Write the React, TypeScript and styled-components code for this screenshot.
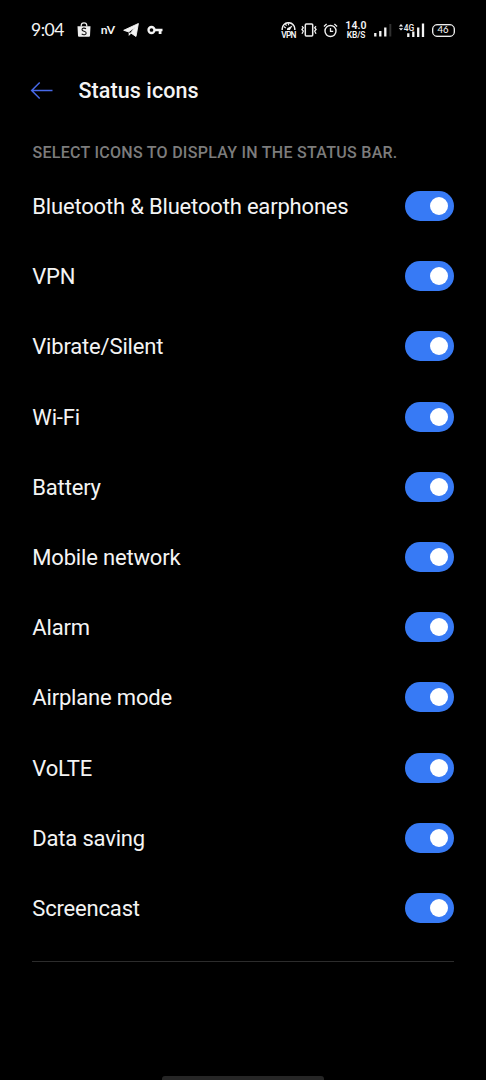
import React, { useState } from 'react';
import styled, { createGlobalStyle } from 'styled-components';

const GlobalStyle = createGlobalStyle`
  * { box-sizing: border-box; }
  body { margin: 0; background: #000; }
`;

const Screen = styled.div`
  display: flex;
  flex-direction: column;
  width: 486px;
  height: 1080px;
  overflow: hidden;
  background: #000;
  color: #f4f4f4;
  font-family: Roboto, sans-serif;
`;

const StatusBar = styled.header`
  display: flex;
  justify-content: space-between;
  align-items: center;
  height: 60px;
  padding: 0 32px 0 31px;
`;

const StatusGroup = styled.div`
  display: flex;
  align-items: center;
  height: 24px;
`;

const Slot = styled.div<{ $width: number; $gap?: number }>`
  display: flex;
  flex-direction: column;
  align-items: center;
  justify-content: center;
  flex: none;
  width: ${(p) => p.$width}px;
  height: 24px;
  margin-left: ${(p) => p.$gap ?? 0}px;
  white-space: nowrap;

  svg { display: block; flex: none; }
`;

const Clock = styled.span`
  font: 400 17.5px/24px Lato, sans-serif;
  letter-spacing: -0.5px;
`;

const Carrier = styled.span`
  font: 700 12px/24px Lato, sans-serif;
`;

const VpnLabel = styled.span`
  padding-top: 1px;
  font: 600 8.4px/8px Roboto, sans-serif;
  letter-spacing: -0.8px;
`;

const SpeedValue = styled.span`
  font: 600 10.5px/10px Roboto, sans-serif;
  letter-spacing: 0.1px;
`;

const SpeedUnit = styled.span`
  font: 600 8.4px/8px Roboto, sans-serif;
  letter-spacing: -0.1px;
`;

const BatteryPill = styled.div`
  display: flex;
  align-items: center;
  justify-content: center;
  width: 23px;
  height: 13px;
  border: 1px solid #eee;
  border-radius: 5px;
  box-shadow: inset 0 0 0 0.5px #aaa;
  font: 500 9.5px/10px Lato, sans-serif;
`;

const TitleBar = styled.div`
  display: flex;
  align-items: center;
  height: 60px;
  padding-left: 30px;
`;

const BackButton = styled.button`
  display: flex;
  width: 24px;
  height: 24px;
  margin: 0 24.5px 0 0;
  padding: 0;
  border: 0;
  background: none;
`;

const Title = styled.h1`
  margin: 0;
  padding-top: 1px;
  font-size: 21.5px;
  line-height: 28px;
  font-weight: 500;
  letter-spacing: 0.08px;
`;

const SectionLabel = styled.h2`
  margin: 21px 0 6px;
  padding-left: 32.5px;
  font-size: 16px;
  line-height: 24px;
  font-weight: 500;
  letter-spacing: 0.28px;
  color: #7c7c7c;
  white-space: nowrap;
`;

const List = styled.ul`
  margin: 0 32.5px 0 32.3px;
  padding: 0 0 18px;
  list-style: none;
  border-bottom: 1px solid #2c2c2c;
`;

const Row = styled.li`
  display: flex;
  justify-content: space-between;
  align-items: center;
  height: 70.2px;
`;

const RowLabel = styled.span`
  padding-top: 2px;
  font-size: 22px;
  line-height: 30px;
  letter-spacing: -0.18px;
`;

const Toggle = styled.button<{ $on: boolean }>`
  display: flex;
  align-items: center;
  justify-content: ${(p) => (p.$on ? 'flex-end' : 'flex-start')};
  width: 48.5px;
  height: 30px;
  padding: 0 6px;
  border: 0;
  border-radius: 15px;
  background: ${(p) => (p.$on ? '#377af5' : '#3a3a3a')};
`;

const Knob = styled.span`
  width: 18px;
  height: 18px;
  border-radius: 50%;
  background: #fff;
`;

const GestureBar = styled.div`
  width: 162px;
  height: 4px;
  margin: auto auto 0;
  border-radius: 3px 3px 0 0;
  background: #262626;
`;

const BagIcon = () => (
  <svg width="14" height="16" viewBox="0 0 14 16">
    <path d="M4.2 4.5V3.6a2.8 2.8 0 0 1 5.6 0v.9" fill="none" stroke="#eee" strokeWidth="1.2" />
    <path d="M.5 4.2h13l-.5 9.6a1 1 0 0 1-1 .9H2a1 1 0 0 1-1-.9z" fill="#eee" />
    <path d="M9 6.7C7.600 5.700 5 5.900 5 7.700c0 1.900 4.200 1.300 4.200 3.400 0 1.900-2.900 2.100-4.500.8" fill="none" stroke="#111" strokeWidth="1.100" />
  </svg>
);

const PlaneIcon = () => (
  <svg width="16" height="14" viewBox="0 0 16 14">
    <path d="M15.400.5 13 13.500 7.700 9.900 12.300 4.200 5.600 8.900.7 7.300z" fill="#f4f4f4" stroke="#f4f4f4" strokeWidth=".9" strokeLinejoin="round" />
    <path d="M5.700 9.200v3.900l2.600-2.500z" fill="#f4f4f4" />
  </svg>
);

const KeyIcon = () => (
  <svg width="16" height="10" viewBox="0 0 16 10">
    <circle cx="4.500" cy="5" r="3" fill="none" stroke="#f4f4f4" strokeWidth="2.300" />
    <path d="M8 3.800h7.500v2.500h-1V9h-2.800V6.300H8z" fill="#f4f4f4" />
  </svg>
);

const GaugeIcon = () => (
  <svg width="15" height="8" viewBox="0 0 15 8">
    <path d="M1.200 8V6.800a6.200 6 0 0 1 12.600 0V8" fill="none" stroke="#eee" strokeWidth="1.500" />
    <path d="M2.800 4.600l2 1.300M7.500 1.200v2M4.500 2l1 1.800" stroke="#eee" strokeWidth="1.200" />
    <path d="M11.800 3.300 8.900 8H6c-.2-1.500.6-2.300 1.700-2.600z" fill="#eee" />
  </svg>
);

const VibrateIcon = () => (
  <svg width="16" height="14" viewBox="0 0 16 14">
    <rect x="4.300" y="1" width="7.400" height="12" rx="1" fill="none" stroke="#eee" strokeWidth="1.500" />
    <path d="M1 3.200l1.300 1.500L.9 6.500l1.400 1.700L1 10.800M15 3.200l-1.300 1.500 1.400 1.800-1.400 1.700L15 10.800" fill="none" stroke="#eee" strokeWidth="1.300" />
  </svg>
);

const AlarmIcon = () => (
  <svg width="15" height="15" viewBox="0 0 15 15">
    <circle cx="7.500" cy="8" r="5.500" fill="none" stroke="#eee" strokeWidth="1.400" />
    <path d="M7.500 5v3.300h2.700M.9 3.400l2.700-2.300M14.100 3.400l-2.700-2.300" fill="none" stroke="#eee" strokeWidth="1.300" />
  </svg>
);

const SignalIcon = () => (
  <svg width="18" height="14" viewBox="0 0 18 14">
    <path d="M1.300 13.500V10M6.300 13.500V8M11.300 13.500V4.500" stroke="#f4f4f4" strokeWidth="2.300" />
    <path d="M16.300 13.500V1" stroke="#303030" strokeWidth="2" />
  </svg>
);

const DataSignalIcon = () => (
  <svg width="27" height="16" viewBox="0 0 27 16">
    <path d="M.8 4.400 3 2l2.200 2.400zM.8 6.200 3 8.600l2.200-2.400z" fill="#eee" />
    <text x="5.800" y="8.800" fill="#eee" fontFamily="Roboto, sans-serif" fontSize="9.500" fontWeight="500" textLength="10.500" lengthAdjust="spacingAndGlyphs">4G</text>
    <path d="M10.300 15V11.200M15.300 15V9.500M20.200 15V5.500M25 15V1.500" stroke="#f4f4f4" strokeWidth="2.300" />
  </svg>
);

const BackArrow = () => (
  <svg width="24" height="24" viewBox="0 0 24 24">
    <path d="M22.500 12.500H1.700M9.700 4.500l-8 8 8 8" fill="none" stroke="#4769e8" strokeWidth="1.500" />
  </svg>
);

const labels = [
  'Bluetooth & Bluetooth earphones',
  'VPN',
  'Vibrate/Silent',
  'Wi-Fi',
  'Battery',
  'Mobile network',
  'Alarm',
  'Airplane mode',
  'VoLTE',
  'Data saving',
  'Screencast',
];

function SettingRow({ label }: { label: string }) {
  const [on, setOn] = useState(true);
  return (
    <Row>
      <RowLabel>{label}</RowLabel>
      <Toggle $on={on} role="switch" aria-checked={on} aria-label={label} onClick={() => setOn(!on)}>
        <Knob />
      </Toggle>
    </Row>
  );
}

export default function App() {
  return (
    <Screen>
      <GlobalStyle />
      <StatusBar>
        <StatusGroup>
          <Slot $width={33}><Clock>9:04</Clock></Slot>
          <Slot $width={14} $gap={13}><BagIcon /></Slot>
          <Slot $width={16} $gap={9}><Carrier>nV</Carrier></Slot>
          <Slot $width={16} $gap={7}><PlaneIcon /></Slot>
          <Slot $width={16} $gap={8}><KeyIcon /></Slot>
        </StatusGroup>
        <StatusGroup>
          <Slot $width={15}><GaugeIcon /><VpnLabel>VPN</VpnLabel></Slot>
          <Slot $width={16} $gap={5}><VibrateIcon /></Slot>
          <Slot $width={15} $gap={6}><AlarmIcon /></Slot>
          <Slot $width={22} $gap={7}><SpeedValue>14.0</SpeedValue><SpeedUnit>KB/S</SpeedUnit></Slot>
          <Slot $width={18} $gap={7}><SignalIcon /></Slot>
          <Slot $width={27} $gap={6}><DataSignalIcon /></Slot>
          <Slot $width={22} $gap={7}><BatteryPill>46</BatteryPill></Slot>
        </StatusGroup>
      </StatusBar>
      <TitleBar>
        <BackButton aria-label="Back"><BackArrow /></BackButton>
        <Title>Status icons</Title>
      </TitleBar>
      <SectionLabel>SELECT ICONS TO DISPLAY IN THE STATUS BAR.</SectionLabel>
      <List>
        {labels.map((label) => (
          <SettingRow key={label} label={label} />
        ))}
      </List>
      <GestureBar />
    </Screen>
  );
}
